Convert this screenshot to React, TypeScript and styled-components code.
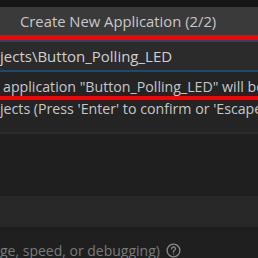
import React from 'react';
import styled, { createGlobalStyle } from 'styled-components';

const Global = createGlobalStyle`
  html, body {
    margin: 0;
    padding: 0;
    background: #1f1f1f;
    width: 258px;
    height: 258px;
    overflow: hidden;
  }
  #root {
    font-family: "Open Sans", "Noto Sans", sans-serif;
    color: #cccccc;
  }
`;

const Page = styled.div`
  display: flex;
  flex-direction: column;
  width: 258px;
  height: 258px;
  overflow: hidden;
  background: #1f1f1f;
  & > * {
    flex-shrink: 0;
  }
`;

const TopStrip = styled.div`
  height: 7px;
  background: #161616;
`;

const TitleBar = styled.div`
  height: 28px;
  background: #3a3a3a;
  display: flex;
  align-items: center;
  padding-left: 20px;
  font-size: 14.8px;
  color: #c8c8c8;
  white-space: nowrap;
`;

const RedMark = styled.div<{ $h: number }>`
  height: ${p => p.$h}px;
  background: #ff0000;
  flex-shrink: 0;
`;

const InputBox = styled.div`
  height: 28px;
  background: #2b2b2b;
  border-top: 2px solid #1d4a6e;
  border-bottom: 2px solid #1d4a6e;
  display: flex;
  align-items: center;
  font-size: 15px;
  color: #d0d0d0;
  white-space: nowrap;
  overflow: hidden;
`;

const Messages = styled.div`
  background: #242424;
  height: 62px;
  display: flex;
  flex-direction: column;
  border-bottom: 2px solid #2c2c2c;
  padding-top: 6px;
  box-sizing: border-box;
`;

const Line = styled.div<{ $indent?: number }>`
  font-size: 14.2px;
  line-height: 18px;
  padding-left: ${p => p.$indent ?? 0}px;
  white-space: nowrap;
  overflow: hidden;
  color: #c8c8c8;
`;

const Spacer = styled.div<{ $h: number }>`
  height: ${p => p.$h}px;
`;

const Band = styled.div`
  height: 31px;
  background: #282828;
`;

const Hint = styled.div`
  display: flex;
  align-items: center;
  gap: 6px;
  font-size: 14px;
  color: #7a7a7a;
  white-space: nowrap;
  padding-top: 14px;
`;

const Help = () => (
  <svg width="15" height="15" viewBox="0 0 16 16" fill="none" stroke="#8a8a8a" strokeWidth="1.4">
    <circle cx="8" cy="8" r="6.8" />
    <path d="M6 6.2a2 2 0 1 1 2.8 1.8c-.6.3-.8.7-.8 1.3v.5" strokeLinecap="round" />
    <circle cx="8" cy="11.8" r=".6" fill="#8a8a8a" stroke="none" />
  </svg>
);

export default function App() {
  return (
    <Page>
      <Global />
      <TopStrip />
      <TitleBar>Create New Application (2/2)</TitleBar>
      <RedMark $h={5} />
      <InputBox>jects\Button_Polling_LED</InputBox>
      <Messages>
        <Line $indent={3}>application "Button_Polling_LED" will be created</Line>
        <RedMark $h={4} />
        <Line>jects (Press 'Enter' to confirm or 'Escape' to cancel)</Line>
      </Messages>
      <Spacer $h={62} />
      <Band />
      <Hint>ge, speed, or debugging) <Help /></Hint>
    </Page>
  );
}
